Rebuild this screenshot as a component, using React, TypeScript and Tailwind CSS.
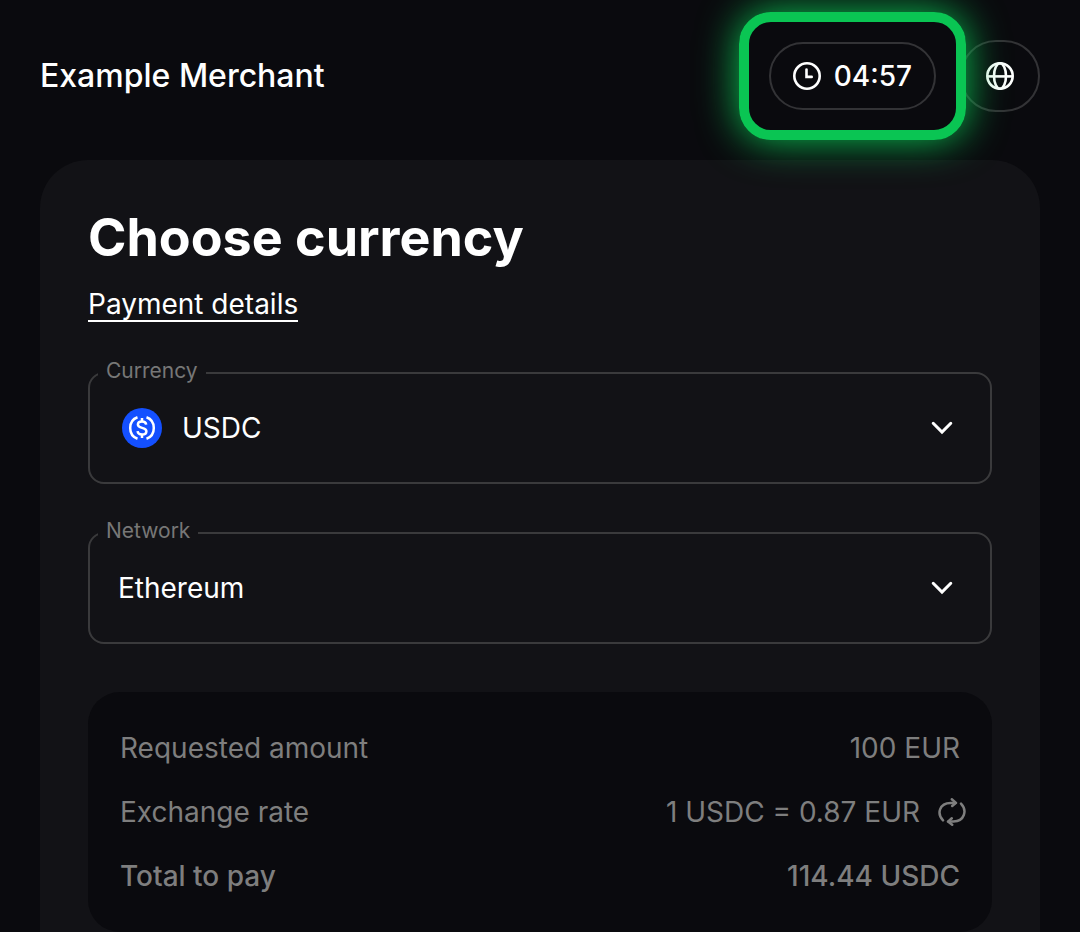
import { useState, type ReactNode } from "react";

const currencies = ["USDC", "USDT", "BTC", "ETH"];
const networks = ["Ethereum", "Polygon", "Solana"];

function ClockIcon() {
  return (
    <svg className="size-7" viewBox="0 0 28 28" fill="none" stroke="currentColor" strokeWidth="2.6" aria-hidden="true">
      <circle cx="14" cy="14" r="12.7" />
      <path d="M13.500 7.500V14.900H18.700" strokeLinecap="round" />
    </svg>
  );
}

function GlobeIcon() {
  return (
    <svg className="size-7" viewBox="0 0 28 28" fill="none" stroke="currentColor" strokeWidth="2.6" aria-hidden="true">
      <circle cx="14" cy="14" r="12.7" />
      <ellipse cx="14" cy="14" rx="6" ry="12.7" />
      <path d="M1 14.400H27" />
    </svg>
  );
}

function RefreshIcon() {
  return (
    <svg
      className="size-7"
      viewBox="0 0 28 28"
      fill="none"
      stroke="currentColor"
      strokeWidth="2.5"
      strokeLinecap="round"
      strokeLinejoin="round"
      aria-hidden="true"
    >
      <path d="M5 22.400C-1.500 15.500 1.500 5 12.500 4.900H17.600" />
      <path d="M13.800 1.300L18 4.900L14.200 8" />
      <path d="M23 5.600C29.500 12.500 26.500 23 15.500 23.600H10.400" />
      <path d="M14.200 26.800L10 23.600L13.800 20.300" />
    </svg>
  );
}

function UsdcIcon() {
  return (
    <svg className="size-10" viewBox="0 0 40 40" fill="none" stroke="#fff" strokeWidth="2.5" aria-hidden="true">
      <circle cx="20" cy="20" r="20" fill="#1450ff" stroke="none" />
      <path d="M15.500 9.200C11 10.800 8.200 15 8.200 20s2.800 9.200 7.300 10.800" />
      <path d="M24.500 9.200C29 10.800 31.800 15 31.800 20s-2.800 9.200-7.300 10.800" />
      <path d="M24.200 16.600c-.3-2-1.900-3.100-4.200-3.100-2.400 0-4.100 1.200-4.100 3.100 0 4.500 8.500 2 8.500 6.600 0 2-1.800 3.300-4.300 3.300-2.600 0-4.300-1.200-4.500-3.300" />
      <path d="M20 10V13.500M20 26.500V30" />
    </svg>
  );
}

type SelectFieldProps = {
  id: string;
  label: string;
  value: string;
  options: string[];
  onChange: (value: string) => void;
  icon?: ReactNode;
};

function SelectField({ id, label, value, options, onChange, icon }: SelectFieldProps) {
  return (
    <fieldset className="min-w-0 rounded-2xl border-2 border-[#3a3a3c] px-2 pb-[11px]">
      <legend className="px-2 pb-1 text-[21px] leading-5 text-[#777777]">
        <label htmlFor={id}>{label}</label>
      </legend>
      <div className="relative h-[86px]">
        {icon && <span className="pointer-events-none absolute inset-y-0 left-6 flex items-center">{icon}</span>}
        <select
          id={id}
          value={value}
          onChange={(e) => onChange(e.target.value)}
          className={`size-full appearance-none bg-transparent pr-20 text-[28px] text-white focus:outline-none ${icon ? "pl-[84px]" : "pl-5"}`}
        >
          {options.map((o) => (
            <option key={o} value={o} className="bg-[#121216]">
              {o}
            </option>
          ))}
        </select>
        <span className="pointer-events-none absolute inset-y-0 right-7 flex items-center">
          <svg className="size-6" viewBox="0 0 24 24" fill="none" stroke="currentColor" strokeWidth="3" strokeLinecap="round" aria-hidden="true">
            <path d="M3.200 7.300L12 16.100L20.800 7.300" />
          </svg>
        </span>
      </div>
    </fieldset>
  );
}

function SummaryRow({ label, children, strong }: { label: string; children: ReactNode; strong?: boolean }) {
  return (
    <div className={`flex h-16 items-center justify-between ${strong ? "font-medium" : ""}`}>
      <dt>{label}</dt>
      <dd className="flex items-center">{children}</dd>
    </div>
  );
}

export default function App() {
  const [currency, setCurrency] = useState("USDC");
  const [network, setNetwork] = useState("Ethereum");

  return (
    <div className="flex min-h-screen flex-col bg-[#0a0a0e] px-10 pt-10 font-['Inter',sans-serif] text-white">
      <header className="mb-12 flex h-[72px] items-center justify-between">
        <div className="text-[32px] font-medium">Example Merchant</div>
        <div className="flex items-center gap-6">
          <div className="relative z-10 flex h-[68px] items-center gap-[13px] rounded-[34px] border-2 border-[#333336] px-[22px] text-[28px] font-medium">
            <ClockIcon />
            <time>04:57</time>
            {/* highlight around the countdown */}
            <div className="pointer-events-none absolute -inset-8 rounded-[32px] border-10 border-[#0ac553] shadow-[0_0_40px_#0ac553]" />
          </div>
          <button
            type="button"
            aria-label="Language"
            className="flex h-[72px] w-20 items-center justify-center rounded-[36px] border-2 border-[#333336]"
          >
            <GlobeIcon />
          </button>
        </div>
      </header>

      <main className="flex-1 rounded-t-[48px] bg-[#121216] px-12 pt-12">
        <h1 className="text-[52px] leading-[60px] font-bold">Choose currency</h1>
        <a href="#details" className="mt-5 inline-block border-b-2 border-white align-top text-[28px] leading-8">
          Payment details
        </a>

        <div className="mt-[39px] flex flex-col gap-[37px]">
          <SelectField
            id="currency"
            label="Currency"
            value={currency}
            options={currencies}
            onChange={setCurrency}
            icon={<UsdcIcon />}
          />
          <SelectField id="network" label="Network" value={network} options={networks} onChange={setNetwork} />
        </div>

        <dl className="mt-12 rounded-[32px] bg-[#0a0a0e] px-8 py-6 text-[28px] text-[#7e7e7e]">
          <SummaryRow label="Requested amount">100 EUR</SummaryRow>
          <SummaryRow label="Exchange rate">
            1 USDC = 0.87 EUR
            <button type="button" aria-label="Refresh rate" className="-mr-1.5 ml-[18px]">
              <RefreshIcon />
            </button>
          </SummaryRow>
          <SummaryRow label="Total to pay" strong>
            114.44 USDC
          </SummaryRow>
        </dl>
      </main>
    </div>
  );
}
